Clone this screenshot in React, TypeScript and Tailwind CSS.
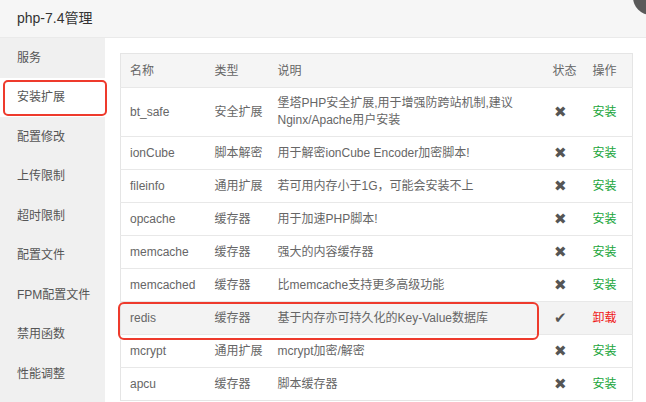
import { useState } from "react";

type Ext = {
  name: string;
  type: string;
  desc: string;
  installed: boolean;
};

const menu = ["服务", "安装扩展", "配置修改", "上传限制", "超时限制", "配置文件", "FPM配置文件", "禁用函数", "性能调整"];

const exts: Ext[] = [
  { name: "bt_safe", type: "安全扩展", desc: "堡塔PHP安全扩展,用于增强防跨站机制,建议Nginx/Apache用户安装", installed: false },
  { name: "ionCube", type: "脚本解密", desc: "用于解密ionCube Encoder加密脚本!", installed: false },
  { name: "fileinfo", type: "通用扩展", desc: "若可用内存小于1G，可能会安装不上", installed: false },
  { name: "opcache", type: "缓存器", desc: "用于加速PHP脚本!", installed: false },
  { name: "memcache", type: "缓存器", desc: "强大的内容缓存器", installed: false },
  { name: "memcached", type: "缓存器", desc: "比memcache支持更多高级功能", installed: false },
  { name: "redis", type: "缓存器", desc: "基于内存亦可持久化的Key-Value数据库", installed: true },
  { name: "mcrypt", type: "通用扩展", desc: "mcrypt加密/解密", installed: false },
  { name: "apcu", type: "缓存器", desc: "脚本缓存器", installed: false },
];

export default function App() {
  const [active, setActive] = useState(1);

  return (
    <div
      className="relative h-[402px] w-[646px] overflow-hidden bg-white text-[12px] text-[#666]"
      style={{ fontFamily: '"Liberation Sans", "Noto Sans CJK SC", sans-serif' }}
    >
      <div className="flex h-[38px] items-center border-b border-[#eaeaea] bg-[#f6f6f6] pl-[17px] text-[14px] text-[#333]">
        php-7.4管理
      </div>
      <div className="absolute right-[-23px] top-[-21px] h-[36px] w-[36px] rounded-full bg-[#5a5a5a]" />

      <div className="flex h-[364px]">
        <div className="w-[105px] shrink-0 bg-[#f0f0f0]">
          {menu.map((item, i) => (
            <div
              key={item}
              className={`relative flex h-[39.5px] cursor-pointer items-center pl-[17px] text-[#555] ${
                i === active ? "bg-white" : ""
              }`}
              onClick={() => setActive(i)}
            >
              {item}
              {i === active && (
                <div className="absolute bottom-[1px] left-[3px] right-[-2px] top-[2px] rounded-[5px] border-2 border-[#ee3a2c]" />
              )}
            </div>
          ))}
        </div>

        <div className="flex-1 pl-[15px] pt-[15px]">
          <table className="w-[512px] table-fixed border-collapse border border-[#e5e5e5]">
            <colgroup>
              <col className="w-[85px]" />
              <col className="w-[63px]" />
              <col className="w-[275px]" />
              <col className="w-[40px]" />
              <col className="w-[49px]" />
            </colgroup>
            <thead>
              <tr className="h-[34px] bg-[#f5f5f5] text-left">
                <th className="p-0 pl-[9px] font-normal">名称</th>
                <th className="p-0 pl-[9px] font-normal">类型</th>
                <th className="p-0 pl-[9px] font-normal">说明</th>
                <th className="p-0 pl-[9px] font-normal">状态</th>
                <th className="p-0 pl-[9px] font-normal">操作</th>
              </tr>
            </thead>
            <tbody>
              {exts.map((e) => (
                <tr key={e.name} className={`h-[33px] border-t border-[#e8e8e8] ${e.installed ? "bg-[#f3f3f3]" : ""}`}>
                  <td className="relative p-0 pl-[9px]">
                    {e.name}
                    {e.installed && (
                      <div className="absolute left-[-3px] top-0 h-[38px] w-[421px] rounded-[6px] border-2 border-[#ee3a2c]" />
                    )}
                  </td>
                  <td className="p-0 pl-[9px]">{e.type}</td>
                  <td className="py-[7px] pl-[9px] pr-[6px] leading-[17px]">{e.desc}</td>
                  <td className="p-0 pl-[10px] text-[15px] text-[#555]">{e.installed ? "✔" : "✖"}</td>
                  <td className={`p-0 pl-[9px] ${e.installed ? "text-[#f01818]" : "text-[#20a53a]"}`}>
                    {e.installed ? "卸载" : "安装"}
                  </td>
                </tr>
              ))}
            </tbody>
          </table>
        </div>
      </div>
    </div>
  );
}
